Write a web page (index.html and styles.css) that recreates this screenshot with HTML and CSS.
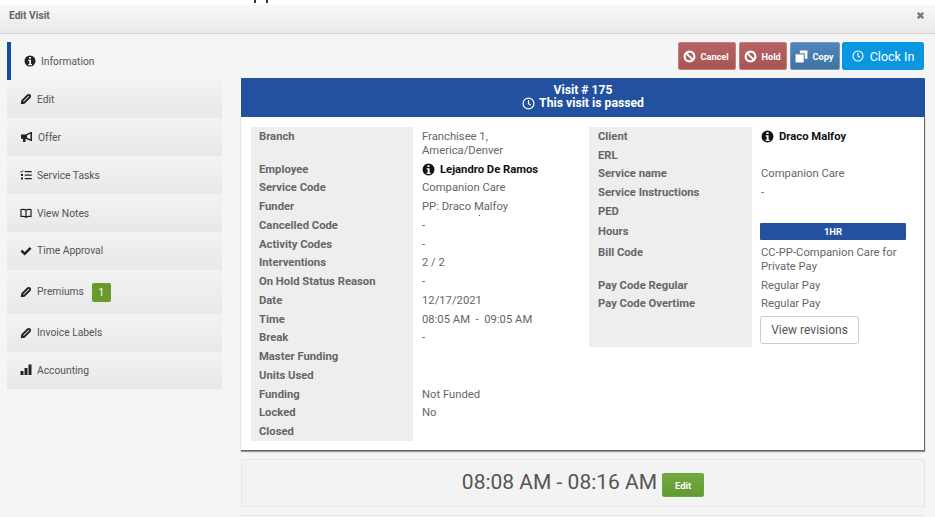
FILE: index.html
```html
<!DOCTYPE html>
<html lang="en">
<head>
<meta charset="utf-8">
<title>Edit Visit</title>
<link rel="stylesheet" href="styles.css">
</head>
<body>
<svg class="defs" width="0" height="0" aria-hidden="true">
  <symbol id="i-info" viewBox="0 0 24 24"><path fill-rule="evenodd" d="M12 1a11 11 0 1 0 0 22 11 11 0 0 0 0-22zM10 4h4v3.500h-4zM8.500 9.500h5.500v8.500h2v2.500H8.500V18h2v-6h-2z"/></symbol>
  <symbol id="i-pencil" viewBox="0 0 24 24"><path fill="none" stroke="currentColor" stroke-width="3.600" stroke-linejoin="round" d="M4 20l1-5L15.500 4.500a2.800 2.800 0 0 1 4 4L9 19z"/><path d="M1.500 22.500l1.500-8 6.500 6.500z"/></symbol>
  <symbol id="i-bullhorn" viewBox="0 0 24 24"><path d="M1 7h9L21 2h2v18h-2L10 15.500v6.500H5V15.500H1z"/><path fill="#eee" d="M13 8.500l7-3v11l-7-3z"/></symbol>
  <symbol id="i-tasks" viewBox="0 0 24 24"><path d="M9.500 4h14v2.500h-14zM9.500 11h14v2.500h-14zM9.500 18h14v2.500h-14zM1.500 4l1.500 1.500L6 2.500l1 1-4 4-2.500-2.500zM2 10h4v4H2zM2 17h4v4H2z"/></symbol>
  <symbol id="i-book" viewBox="0 0 24 24"><path fill="none" stroke="currentColor" stroke-width="2.400" d="M12 6.500C10 4.500 5 4.500 2 5v14c3-.5 8-.5 10 1.500 2-2 7-2 10-1.500V5c-3-.5-8-.5-10 1.500zM12 6.500v14"/></symbol>
  <symbol id="i-check" viewBox="0 0 24 24"><path d="M1 13l3.500-3.500L9.500 14 19.500 4 23 7.500 9.500 21z"/></symbol>
  <symbol id="i-bars" viewBox="0 0 24 24"><path d="M1 14h6v8H1zM9 8h6v14H9zM17 1h6v21h-6z"/></symbol>
  <symbol id="i-ban" viewBox="0 0 24 24"><path fill-rule="evenodd" d="M12 1a11 11 0 1 0 0 22 11 11 0 0 0 0-22zM5 12c0-1.300.4-2.500 1-3.500L15.500 18c-1 .6-2.200 1-3.500 1a7 7 0 0 1-7-7zm13 3.500L8.500 6c1-.6 2.200-1 3.500-1a7 7 0 0 1 7 7c0 1.300-.4 2.500-1 3.500z"/></symbol>
  <symbol id="i-copy" viewBox="0 0 24 24"><path d="M9 1h14v15h-5V6H9z"/><path d="M1 8h15v15H1z"/></symbol>
  <symbol id="i-clock" viewBox="0 0 24 24"><circle cx="12" cy="12" r="10" fill="none" stroke="currentColor" stroke-width="2.200"/><path fill="none" stroke="currentColor" stroke-width="2.200" d="M12 5.500V12.500l4 2.500"/></symbol>
  <symbol id="i-times" viewBox="0 0 24 24"><path d="M7 2.500l5 5 5-5 4.500 4.500-5 5 5 5-4.500 4.500-5-5-5 5L2.500 17l5-5-5-5z"/></symbol>
</svg>

<div class="stray"><span class="stem"></span><span class="stem"></span></div>

<header class="modal-head">
  <h1 class="modal-title">Edit Visit</h1>
  <svg class="close-icon"><use href="#i-times"/></svg>
</header>

<div class="layout">
  <nav class="side">
    <a class="nav-item active"><svg class="ico"><use href="#i-info"/></svg>Information</a>
    <a class="nav-item"><svg class="ico"><use href="#i-pencil"/></svg>Edit</a>
    <a class="nav-item"><svg class="ico wide"><use href="#i-bullhorn"/></svg>Offer</a>
    <a class="nav-item"><svg class="ico"><use href="#i-tasks"/></svg>Service Tasks</a>
    <a class="nav-item"><svg class="ico"><use href="#i-book"/></svg>View Notes</a>
    <a class="nav-item short"><svg class="ico"><use href="#i-check"/></svg>Time Approval</a>
    <a class="nav-item tall"><svg class="ico"><use href="#i-pencil"/></svg>Premiums<span class="count">1</span></a>
    <a class="nav-item"><svg class="ico"><use href="#i-pencil"/></svg>Invoice Labels</a>
    <a class="nav-item short"><svg class="ico"><use href="#i-bars"/></svg>Accounting</a>
  </nav>

  <main class="content">
    <div class="actions">
      <button class="btn red"><svg class="bi"><use href="#i-ban"/></svg>Cancel</button>
      <button class="btn red hold"><svg class="bi"><use href="#i-ban"/></svg>Hold</button>
      <button class="btn blue"><svg class="bi"><use href="#i-copy"/></svg>Copy</button>
      <button class="btn-clock"><svg class="ci"><use href="#i-clock"/></svg>Clock In</button>
    </div>

    <div class="banner">
      <div>Visit # 175</div>
      <div class="banner-sub"><svg class="bc"><use href="#i-clock"/></svg>This visit is passed</div>
    </div>

    <section class="panel">
      <span class="speck"></span>
      <div class="col">
        <div class="lbl two">Branch</div><div class="val two">Franchisee 1,<br>America/Denver</div>
        <div class="lbl">Employee</div><div class="val person"><svg class="pi"><use href="#i-info"/></svg>Lejandro De Ramos</div>
        <div class="lbl">Service Code</div><div class="val">Companion Care</div>
        <div class="lbl">Funder</div><div class="val">PP: Draco Malfoy</div>
        <div class="lbl">Cancelled Code</div><div class="val">-</div>
        <div class="lbl">Activity Codes</div><div class="val">-</div>
        <div class="lbl">Interventions</div><div class="val">2 / 2</div>
        <div class="lbl">On Hold Status Reason</div><div class="val">-</div>
        <div class="lbl">Date</div><div class="val">12/17/2021</div>
        <div class="lbl">Time</div><div class="val">08:05 AM &nbsp;-&nbsp; 09:05 AM</div>
        <div class="lbl">Break</div><div class="val">-</div>
        <div class="lbl">Master Funding</div><div class="val"></div>
        <div class="lbl">Units Used</div><div class="val"></div>
        <div class="lbl">Funding</div><div class="val">Not Funded</div>
        <div class="lbl">Locked</div><div class="val">No</div>
        <div class="lbl">Closed</div><div class="val"></div>
      </div>
      <div class="col col-right">
        <div class="lbl">Client</div><div class="val person"><svg class="pi"><use href="#i-info"/></svg>Draco Malfoy</div>
        <div class="lbl">ERL</div><div class="val"></div>
        <div class="lbl">Service name</div><div class="val">Companion Care</div>
        <div class="lbl">Service Instructions</div><div class="val">-</div>
        <div class="lbl">PED</div><div class="val"></div>
        <div class="lbl hours">Hours</div><div class="val hours"><div class="hours-bar">1HR</div></div>
        <div class="lbl two">Bill Code</div><div class="val two">CC-PP-Companion Care for<br>Private Pay</div>
        <div class="lbl">Pay Code Regular</div><div class="val">Regular Pay</div>
        <div class="lbl">Pay Code Overtime</div><div class="val">Regular Pay</div>
        <div class="lbl rev"></div><div class="val rev"><button class="btn-rev">View revisions</button></div>
      </div>
    </section>

    <section class="timer">
      <span class="timer-text">08:08 AM - 08:16 AM</span>
      <button class="btn-edit">Edit</button>
    </section>
    <div class="next-box"></div>
  </main>
</div>
</body>
</html>
```

FILE: styles.css
```css
* { box-sizing: border-box; }
html, body { margin: 0; height: 517px; overflow: hidden; }
body { background: #f5f5f5; font-family: Roboto, "Liberation Sans", sans-serif; color: #555; position: relative; }
.defs { position: absolute; }
svg { fill: currentColor; }

.stray { height: 5px; background: #fff; position: absolute; top: 0; left: 0; right: 0; padding-left: 254px; display: flex; gap: 10px; align-items: flex-start; }
.stem { width: 2px; height: 3px; background: #443322; }
.modal-head { margin-top: 5px; height: 29px; padding: 0 9px; display: flex; align-items: center; justify-content: space-between; background: linear-gradient(#f8f8f8, #e9e9e9); border-bottom: 1px solid #d4d4d4; }
.modal-title { margin: 0 0 7px; font-size: 10.200px; font-weight: 700; color: #666; }
.close-icon { width: 9px; height: 9px; margin: 0 1px 7px 0; color: #777; }

.layout { display: flex; padding: 8px 10px 0 7px; gap: 19px; }
.side { width: 215px; flex: none; display: flex; flex-direction: column; }
.nav-item { height: 38px; display: flex; align-items: center; gap: 5px; padding-left: 13px; font-size: 10.300px; color: #555; background: linear-gradient(#f3f3f3, #e8e8e8); }
.nav-item.short { height: 37.500px; }
.nav-item.tall { height: 44px; }
.nav-item.active { background: #f5f5f5; border-left: 4px solid #0d4fa3; padding-left: 13px; }
.ico { width: 12px; height: 12px; color: #222; flex: none; }
.ico.wide { width: 13px; }
.count { margin: 2px 0 0 3px; width: 19px; height: 19px; border-radius: 2px; background: #6a9a2e; color: #fff; display: flex; align-items: center; justify-content: center; font-size: 10px; }

.content { flex: 1; min-width: 0; display: flex; flex-direction: column; }
.actions { height: 28px; padding-right: 1px; display: flex; justify-content: flex-end; gap: 3px; }
.btn { height: 28px; border-radius: 2px; color: #fff; font: 700 9.200px Roboto, sans-serif; display: flex; align-items: center; gap: 4.500px; padding: 0 4px; white-space: nowrap; }
.btn.red { background: linear-gradient(#b76363, #a85454); border: 1px solid #c38080; width: 58px; }
.btn.red.hold { width: 48px; }
.btn.blue { background: linear-gradient(#4f86bd, #41729f); border: 1px solid #6c9cc7; width: 50px; }
.bi { width: 13px; height: 13px; flex: none; }
.btn-clock { width: 82px; height: 28px; margin-left: -1px; border: 0; border-radius: 2px; color: #fff; font: 400 12.500px Roboto, sans-serif; display: flex; align-items: center; justify-content: center; gap: 6px;
  background:
    linear-gradient(#e4e34a, #e4e34a) 0 0 / 1px 1px no-repeat,
    linear-gradient(#e4e34a, #e4e34a) 100% 0 / 1px 1px no-repeat,
    linear-gradient(#e4e34a, #e4e34a) 0 100% / 1px 1px no-repeat,
    linear-gradient(#e4e34a, #e4e34a) 100% 100% / 1px 1px no-repeat,
    #0998e0; }
.ci { width: 12px; height: 12px; }

.banner { margin-top: 8px; height: 39px; background: #24519f; color: #fff; font-size: 12.200px; font-weight: 700; line-height: 13px; text-align: center; padding-top: 6px; border-radius: 1px 1px 0 0; }
.banner-sub { display: flex; justify-content: center; align-items: center; gap: 4px; }
.bc { width: 13px; height: 13px; }

.panel { height: 334px; position: relative; background: #fff; border-right: 1px solid #666; border-bottom: 1px solid #666; display: flex; align-items: flex-start; padding: 10px 0 0 10px; gap: 14px; box-shadow: 0 1px 1px #999; }
.speck { position: absolute; left: 238px; top: 98px; width: 1px; height: 1px; background: #1a2fd0; }
.col { width: 324px; flex: none; display: grid; grid-template-columns: 162px 1fr; }
.col-right { width: 326px; grid-template-columns: 163px 1fr; }
.lbl, .val { font-size: 11.250px; line-height: 14px; padding: 2.875px 0 1.875px; min-height: 18.750px; }
.lbl { background: #eee; padding-left: 8px; font-weight: 700; color: #666; }
.col-right .lbl { padding-left: 9px; }
.val { padding-left: 9px; color: #666; }
.val.person { font-weight: 700; color: #111; display: flex; align-items: center; gap: 5px; }
.pi { width: 13px; height: 13px; flex: none; color: #111; }
.lbl.hours, .val.hours { height: 22.250px; }
.lbl.hours { padding-top: 4px; }
.val.hours { padding: 2.500px 0 0 8px; }
.hours-bar { width: 146px; height: 17px; background: #24519f; color: #fff; font-size: 9.500px; font-weight: 700; line-height: 17px; text-align: center; border-radius: 1px; }
.lbl.rev, .val.rev { height: 33.500px; padding-top: 2.500px; padding-bottom: 0; }
.val.rev { padding-left: 8px; }
.btn-rev { width: 99px; height: 28px; background: #fff; border: 1px solid #ccc; border-radius: 3px; color: #555; font: 400 12px Roboto, sans-serif; }

.timer { margin-top: 8px; height: 48px; background: #f3f3f3; border: 1px solid #e6e6e6; display: flex; align-items: center; justify-content: center; gap: 5px; }
.timer-text { font-size: 21px; color: #555; margin-bottom: 3px; }
.btn-edit { width: 42px; height: 24px; border: 1px solid #69a83c; border-radius: 2px; background: linear-gradient(#74aa3f, #609b32); color: #fff; font: 700 9.500px Roboto, sans-serif; margin-top: 4px; }
.next-box { margin-top: 8px; height: 20px; border-top: 1px solid #e6e6e6; }
```
